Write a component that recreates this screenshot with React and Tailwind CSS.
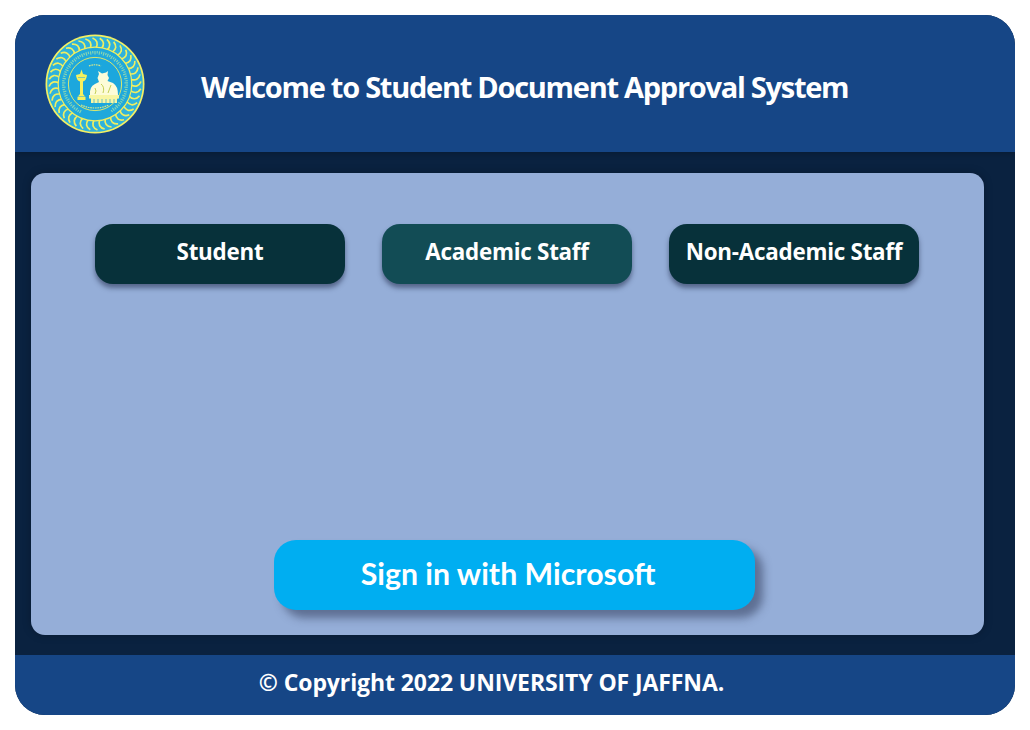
import React from "react";

const Logo = () => {
  const ticks = Array.from({ length: 40 }, (_, i) => (i * 360) / 40);
  const dots = Array.from({ length: 90 }, (_, i) => (i * 360) / 90);
  return (
    <svg width="100" height="100" viewBox="0 0 100 100" className="shrink-0 mt-[1px]">
      <circle cx="50" cy="50" r="49.5" fill="#f4f062" />
      <circle cx="50" cy="50" r="47.8" fill="#2fb2dc" />
      {ticks.map((a) => (
        <path
          key={a}
          d="M47.5 4 Q54.5 7 51 14"
          fill="none"
          stroke="#f0ee60"
          strokeWidth="1.7"
          transform={`rotate(${a} 50 50)`}
        />
      ))}
      <circle cx="50" cy="50" r="36.8" fill="#1fa8dc" stroke="#f0ee60" strokeWidth="1.2" />
      {/* lettering band, too small to read in the picture */}
      {dots.map((a) =>
        a > 150 && a < 205 ? null : (
          <rect
            key={a}
            x="49.4"
            y="17"
            width="1.2"
            height={a % 8 < 4 ? 3.5 : 2.4}
            fill="#a9e3a6"
            opacity="0.75"
            transform={`rotate(${a} 50 50)`}
          />
        )
      )}
      <circle cx="50" cy="50" r="26.6" fill="#1ca7dd" stroke="#f0ee60" strokeWidth="0.9" />
      {/* lamp */}
      <path
        d="M36.5 35.5 L38 40 L42 41 Q41.5 46.5 38 47.5 L38 60 L40.5 63 L40.5 66 L32.5 66 L32.5 63 L35 60 L35 47.5 Q31.5 46.5 31 41 L35 40 Z"
        fill="#f6f15e"
      />
      <path d="M33 43.5 H40 M33 62.5 H40" stroke="#5cbcc0" strokeWidth="0.7" />
      {/* bull and its plinth */}
      <path
        d="M45 61 Q44 53 50 50 L54 48 L52.5 44 L54 40 L53 37 L57 39.5 L61 38.5 L63 37 L62.5 41 L64 44 L62.5 47 L68 49 Q73 52 73 61 Z"
        fill="#fdfcd8"
      />
      <path d="M56 50 Q60 53 58 59 M66 51 L63 59 M50 54 Q52 57 50 60" stroke="#c4cf55" strokeWidth="1" fill="none" />
      <path d="M44 61 H74 V64.5 H72 V69 H46 V64.5 H44 Z" fill="#f8f6a4" />
      <path d="M49 65 V69 M53 65 V69 M57 65 V69 M61 65 V69 M65 65 V69 M69 65 V69" stroke="#58b9c8" strokeWidth="0.9" />
      {/* motto strip below the crest */}
      <path d="M36 71 Q50 77 64 71" fill="none" stroke="#d9e98a" strokeWidth="1.2" strokeDasharray="1.6 0.8" />
      <path d="M44 32 Q50 29.5 56 32" fill="none" stroke="#d9e98a" strokeWidth="1.2" strokeDasharray="1.6 0.8" />
    </svg>
  );
};

const RoleButton = ({ label, active }) => (
  <button
    className={`w-[250px] h-[60px] rounded-[18px] pb-[5px] text-white text-[22.4px] font-bold tracking-[-0.25px] shadow-[0_4px_5px_rgba(20,30,60,0.5)] ${
      active ? "bg-[#124c55]" : "bg-[#07313a]"
    }`}
  >
    {label}
  </button>
);

export default function App() {
  return (
    <div className="w-[1030px] h-[730px] bg-white p-[15px] font-['Open_Sans',sans-serif]">
      <div className="w-[1000px] h-[700px] rounded-[30px] overflow-hidden flex flex-col bg-[#0a2240]">
        <header className="h-[137px] bg-[#164686] flex items-center pl-[30px] shadow-[0_2px_6px_rgba(0,0,0,0.2)]">
          <Logo />
          <h1 className="ml-[56px] pt-[6px] text-white text-[29px] font-bold tracking-[-1.27px]">
            Welcome to Student Document Approval System
          </h1>
        </header>

        <main className="flex-1 pt-[21px] pb-5 pl-4 pr-[31px]">
          <div className="h-full bg-[#95aed8] rounded-[14px] flex flex-col items-center pt-[51px] pb-[25px] pr-[1px] shadow-[0_0_8px_rgba(0,0,0,0.25)]">
            <div className="flex gap-[37px]">
              <RoleButton label="Student" />
              <RoleButton label="Academic Staff" active />
              <RoleButton label="Non-Academic Staff" />
            </div>
            <button className="mt-auto ml-[14px] w-[481px] h-[70px] rounded-[22px] pb-[2px] pr-[12px] bg-[#00aef1] text-white text-[30.3px] font-bold font-['Lato',sans-serif] shadow-[8px_8px_8px_rgba(40,50,80,0.5)]">
              Sign in with Microsoft
            </button>
          </div>
        </main>

        <footer className="h-[60px] bg-[#164686] flex items-center justify-center pr-[47px] pb-[6px] text-white text-[23px] font-bold tracking-[-0.1px]">
          © Copyright 2022 UNIVERSITY OF JAFFNA.
        </footer>
      </div>
    </div>
  );
}
